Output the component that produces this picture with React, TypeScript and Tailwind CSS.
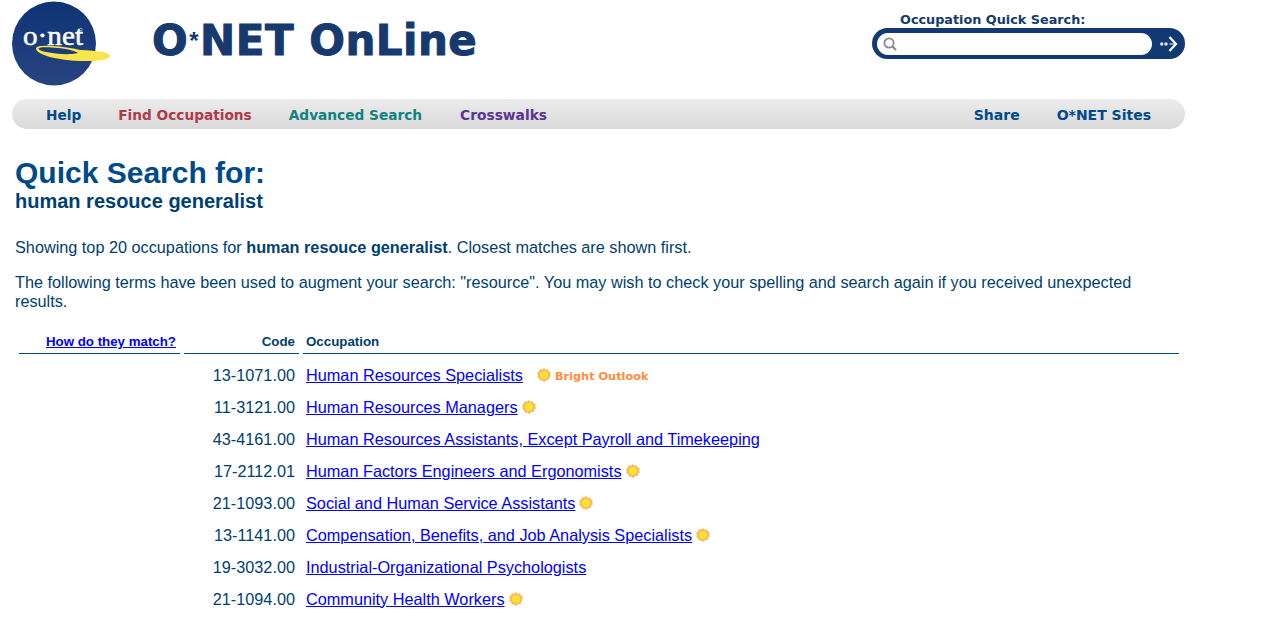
const occupations = [
  { code: '13-1071.00', title: 'Human Resources Specialists', bright: 'label' },
  { code: '11-3121.00', title: 'Human Resources Managers', bright: 'icon' },
  { code: '43-4161.00', title: 'Human Resources Assistants, Except Payroll and Timekeeping' },
  { code: '17-2112.01', title: 'Human Factors Engineers and Ergonomists', bright: 'icon' },
  { code: '21-1093.00', title: 'Social and Human Service Assistants', bright: 'icon' },
  { code: '13-1141.00', title: 'Compensation, Benefits, and Job Analysis Specialists', bright: 'icon' },
  { code: '19-3032.00', title: 'Industrial-Organizational Psychologists' },
  { code: '21-1094.00', title: 'Community Health Workers', bright: 'icon' },
];

function Logo() {
  return (
    <svg width="98" height="85" viewBox="0 0 98 85" aria-label="O*NET logo">
      <defs>
        <linearGradient id="globe" x1="0" y1="0" x2="0" y2="1">
          <stop offset="0" stopColor="#0f3473" />
          <stop offset="0.55" stopColor="#1c3c7c" />
          <stop offset="1" stopColor="#28447f" />
        </linearGradient>
      </defs>
      <circle cx="42" cy="42.5" r="42" fill="url(#globe)" />
      <text x="11" y="44" fill="#ffffff" fontFamily="'Liberation Serif', serif" fontSize="28" textLength="60" lengthAdjust="spacingAndGlyphs" stroke="#ffffff" strokeWidth="0.5">
        o·net
      </text>
      <circle cx="69" cy="28.5" r="1.4" fill="none" stroke="#c5d0e2" strokeWidth="0.6" />
      <path d="M24 47.5 C24 45 32 44.5 40 45 C50 45.5 60 47 68 49 C80 49.5 98 50.5 98 55 C98 59.5 82 60.5 68 60 C44 59 24 53.5 24 47.5 Z" fill="#fbe54a" />
      <path d="M26.5 47.5 C27 46 36 46 46 47 C54 47.8 62 49.5 66 52 C60 53.5 52 53.5 44 52.5 C34 51.5 26.5 49.5 26.5 47.5 Z" fill="#1c3c7c" />
    </svg>
  );
}

function SunIcon() {
  return (
    <svg width="14" height="14" viewBox="0 0 14 14" className="block shrink-0" aria-hidden>
      <path
        d="M7 0 L8.7 1.9 L11 1.2 L11.7 3.4 L13.9 4.2 L13 6.4 L14 8.2 L12.1 9.6 L11.7 12 L9.3 12 L7.3 13.9 L5.3 12.4 L2.9 12.5 L2.2 10.3 L0.3 9 L1 6.9 L0.1 4.9 L2.1 3.6 L2.7 1.3 L5.1 1.7 Z"
        fill="#f7b75a"
      />
      <circle cx="7" cy="7" r="4.3" fill="#ffe033" />
    </svg>
  );
}

export default function App() {
  return (
    <div className="h-[617px] w-[1277px] overflow-hidden bg-white font-['Liberation_Sans',Arial,sans-serif] text-[16.25px] text-[#004070]">
      <header className="flex h-[99px] w-[1185px] items-start justify-between pl-[12px] pt-[1px]">
        <div className="flex items-start">
          <Logo />
          <div className="ml-[42px] mt-[16px] font-['DejaVu_Sans',sans-serif] text-[42px] leading-[48px] font-bold tracking-[0.5px] text-[#173a6e] [-webkit-text-stroke:1px_#173a6e]">
            O<span className="mx-[1px] align-[6px] font-['Liberation_Sans',sans-serif] text-[24px] [-webkit-text-stroke:0px]">*</span>NET OnLine
          </div>
        </div>
        <div className="w-[313px] pt-[11px]">
          <div className="pl-[28px] font-['DejaVu_Sans',sans-serif] text-[12.8px] leading-[16px] font-bold text-[#173a6e]">
            Occupation Quick Search:
          </div>
          <div className="flex h-[31px] items-center rounded-full bg-[#123a72] pl-[5px] pr-[7px]">
            <div className="flex h-[22px] flex-1 items-center rounded-full bg-white pl-[5px]">
              <svg width="16" height="16" viewBox="0 0 16 16" fill="none" stroke="#8c8c8c" aria-hidden>
                <circle cx="7" cy="7" r="4.6" strokeWidth="1.8" />
                <path d="M10.5 10.5 L14 14" strokeWidth="2.4" />
              </svg>
            </div>
            <svg width="18" height="16" viewBox="0 0 18 16" fill="none" className="ml-[8px]" aria-hidden>
              <circle cx="1.8" cy="8" r="1.7" fill="#dfe6f0" />
              <circle cx="6" cy="8" r="1.7" fill="#dfe6f0" />
              <path d="M9.5 1 L16 8 L9.5 15" stroke="#ffffff" strokeWidth="2.2" />
              <path d="M9.5 8 H15" stroke="#ffffff" strokeWidth="1" />
            </svg>
          </div>
        </div>
      </header>

      <nav className="ml-[12px] flex h-[30px] w-[1173px] items-center justify-between rounded-full bg-gradient-to-b from-[#ececec] to-[#d9d9d9] pl-[34px] pr-[34px] pt-[2px] font-['DejaVu_Sans',sans-serif] font-bold">
        <div className="flex gap-[37px] text-[13.7px]">
          <span className="text-[#004a8c]">Help</span>
          <span className="text-[#b03a48]">Find Occupations</span>
          <span className="text-[#0f8282]">Advanced Search</span>
          <span className="ml-[1px] text-[13.8px] text-[#5a3496]">Crosswalks</span>
        </div>
        <div className="flex gap-[37px] text-[14px] text-[#004a8c]">
          <span>Share</span>
          <span>O*NET Sites</span>
        </div>
      </nav>

      <main className="px-[15px]">
        <h1 className="mt-[26px] text-[30px] leading-[36px] font-bold text-[#004a87]">Quick Search for:</h1>
        <h2 className="-mt-[1px] text-[20px] leading-[22px] font-bold text-[#004070]">human resouce generalist</h2>

        <p className="mt-[25px] leading-[20px]">
          Showing top 20 occupations for <b>human resouce generalist</b>. Closest matches are shown first.
        </p>
        <p className="mt-[16px] w-[1160px] leading-[19px]">
          The following terms have been used to augment your search: "resource". You may wish to check your spelling
          and search again if you received unexpected results.
        </p>

        <div className="ml-[4px] mt-[22px] grid w-[1160px] grid-cols-[161px_115px_1fr] gap-x-[4px] text-[13.3px] font-bold">
          <div className="border-b border-[#004a87] pb-[3px] pr-[4px] text-right leading-[17px]">
            <a href="#" className="text-[#0000ff] underline">How do they match?</a>
          </div>
          <div className="border-b border-[#004a87] pb-[3px] pr-[4px] text-right leading-[17px]">Code</div>
          <div className="border-b border-[#004a87] pb-[3px] pl-[3px] leading-[17px]">Occupation</div>
        </div>

        <div className="ml-[4px] mt-[5px] w-[1160px]">
          {occupations.map((o) => (
            <div key={o.code} className="grid h-[32px] grid-cols-[161px_115px_1fr] items-center gap-x-[4px]">
              <div />
              <div className="pr-[4px] text-right">{o.code}</div>
              <div className="flex items-center pl-[3px]">
                <a href="#" className="text-[16.28px] text-[#0000ff] underline">{o.title}</a>
                {o.bright === 'icon' && (
                  <span className="ml-[4px]"><SunIcon /></span>
                )}
                {o.bright === 'label' && (
                  <>
                    <span className="ml-[14px]"><SunIcon /></span>
                    <span className="ml-[4px] pt-[4px] font-['DejaVu_Sans',sans-serif] text-[11.3px] font-bold text-[#ff8c3c]">Bright Outlook</span>
                  </>
                )}
              </div>
            </div>
          ))}
        </div>
      </main>
    </div>
  );
}
